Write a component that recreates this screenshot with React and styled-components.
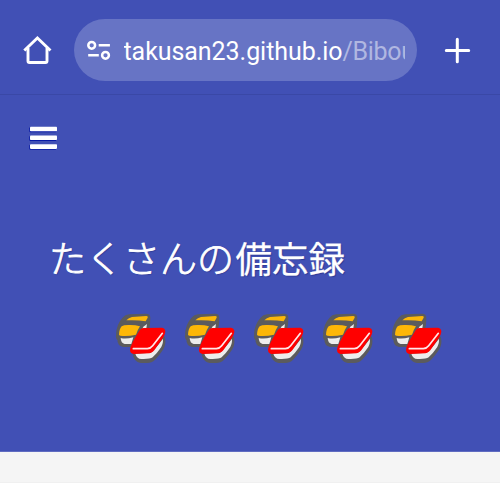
import React from "react";
import styled, { createGlobalStyle } from "styled-components";

const GlobalStyle = createGlobalStyle`
  * { box-sizing: border-box; }
  body { margin: 0; background: #fff; overflow: hidden; }
`;

const Screen = styled.div`
  width: 500px;
  height: 500px;
  overflow: hidden;
  color: #fff;
  background: #fff;
`;

const Toolbar = styled.header`
  display: flex;
  align-items: center;
  height: 95px;
  padding: 5px 26px 0 20px;
  background: #4150b5;
  border-bottom: 1px solid #3a48a6;
`;

const IconButton = styled.button`
  display: flex;
  flex: none;
  padding: 0;
  border: 0;
  background: none;
  color: #fff;
`;

const AddressBar = styled.div`
  display: flex;
  align-items: center;
  width: 343px;
  height: 62px;
  margin: 0 23px 0 20px;
  padding: 0 12px 0 11px;
  border-radius: 31px;
  background: #6774c5;
`;

const Url = styled.div`
  flex: 1;
  min-width: 0;
  margin-left: 10.5px;
  padding-top: 4px;
  overflow: hidden;
  white-space: nowrap;
  font: 400 25px/36px Roboto, sans-serif;
  letter-spacing: -0.06px;
`;

const Path = styled.span`
  color: #b0b7e1;
  letter-spacing: -0.3px;
`;

const Hero = styled.main`
  height: 357px;
  padding: 28px 28px 0;
  background: #4150b5;
  border-bottom: 1px solid #606cc1;
`;

const Title = styled.h1`
  margin: 77px 0 0 21px;
  font: 300 37px/54px "Noto Sans CJK JP", sans-serif;
  white-space: nowrap;
  -webkit-text-stroke: 0.8px #fff;
  text-shadow: 1px 1px 1px rgba(20, 30, 110, 0.45);
`;

const Kanji = styled.span`
  margin-left: 1.5px;
  font-size: 36.5px;
  font-weight: 400;
  -webkit-text-stroke: 0.25px #fff;
`;

const SushiRow = styled.div`
  display: flex;
  gap: 9px;
  margin: 23px 0 0 84px;

  svg { flex: none; }
`;

const Gap = styled.div`
  height: 31px;
  background: #f5f5f5;
  border-bottom: 1px solid #f0f0f0;
`;

const HomeIcon = () => (
  <svg width="34" height="34" viewBox="0 0 34 34" fill="none" stroke="currentColor" strokeWidth="2.9" strokeLinejoin="round">
    <path d="M4.3 17.5 17.4 5 30.5 17.5" strokeLinejoin="miter" />
    <path d="M8 15v13q0 1.5 1.5 1.5h16q1.5 0 1.5-1.5V15" />
  </svg>
);

const TuneIcon = () => (
  <svg width="28" height="28" viewBox="0 0 28 28" fill="none" stroke="currentColor" strokeWidth="2.5">
    <circle cx="6.7" cy="9.3" r="3.4" />
    <path d="M13.7 9.3h11.2M3.2 19.3h10.6" />
    <circle cx="20.5" cy="19.3" r="3.4" />
  </svg>
);

const PlusIcon = () => (
  <svg width="34" height="34" viewBox="0 0 34 34" fill="none" stroke="currentColor" strokeWidth="3" strokeLinecap="round">
    <path d="M17.3 6.3v22.4M6.3 17.5h22.4" />
  </svg>
);

const MenuIcon = () => (
  <svg width="32" height="30" viewBox="0 0 32 30">
    <g fill="#0719a5">
      <rect x="1.3" y="4.2" width="27" height="5" rx="1" />
      <rect x="1.3" y="13" width="27" height="5" rx="1" />
      <rect x="1.3" y="21.8" width="27" height="5" rx="1" />
    </g>
    <g fill="#fff">
      <rect x="2" y="3.7" width="27" height="4.6" rx=".8" />
      <rect x="2" y="12.5" width="27" height="4.6" rx=".8" />
      <rect x="2" y="21.3" width="27" height="4.6" rx=".8" />
    </g>
  </svg>
);

const Sushi = () => (
  <svg width="60" height="60" viewBox="0 0 180 180" strokeLinejoin="round" strokeLinecap="round">
    <path d="M18 80Q19 51 36 33Q42 26 52 25L102 23Q109 23 109 29L108 50L104 68L70 111H34Q22 109 22 94Q17 90 18 80Z" fill="#5b5b5d" stroke="#5b5b5d" strokeWidth="12" />
    <path d="M26 90Q42 94 64 88L58 108H38Q27 106 26 90Z" fill="#ededed" />
    <path d="M21 80Q22 62 29 55Q35 51 48 51Q68 50 84 55Q77 65 72 80Q46 86 25 83Q21 82 21 80Z" fill="#fdb707" />
    <path d="M43 37Q50 29 60 27L103 24Q109 24 107 29L101 40Q75 35 43 37Z" fill="#fdb707" />
    <path d="M94 56L105 48L103 61L91 63Z" fill="#ededed" />
    <path d="M67 132L153 90Q157 108 148 122Q138 137 125 151Q117 159 105 159H87Q70 157 67 132Z" fill="#5b5b5d" stroke="#5b5b5d" strokeWidth="12" />
    <path d="M70 137L116 134Q126 128 153 92Q154 110 144 122Q134 137 122 148Q114 154 88 153Q74 152 70 137Z" fill="#ededed" />
    <path d="M83 67Q87 60 95 60L150 59Q160 61 160 71Q159 80 153 89L131 121Q123 134 112 136L65 138Q54 136 54 125Q55 111 83 67Z" fill="#f00" />
    <path d="M64 122H106Q116 121 122 113L151 76" fill="none" stroke="#ffe8ea" strokeWidth="5" />
  </svg>
);

export default function App() {
  return (
    <Screen>
      <GlobalStyle />
      <Toolbar>
        <IconButton aria-label="Home"><HomeIcon /></IconButton>
        <AddressBar>
          <TuneIcon />
          <Url>takusan23.github.io<Path>/Bibouroku</Path></Url>
        </AddressBar>
        <IconButton aria-label="New tab"><PlusIcon /></IconButton>
      </Toolbar>
      <Hero>
        <IconButton aria-label="Menu"><MenuIcon /></IconButton>
        <Title>たくさんの<Kanji>備忘録</Kanji></Title>
        <SushiRow role="img" aria-label="sushi">
          {[0, 1, 2, 3, 4].map((i) => <Sushi key={i} />)}
        </SushiRow>
      </Hero>
      <Gap />
    </Screen>
  );
}
